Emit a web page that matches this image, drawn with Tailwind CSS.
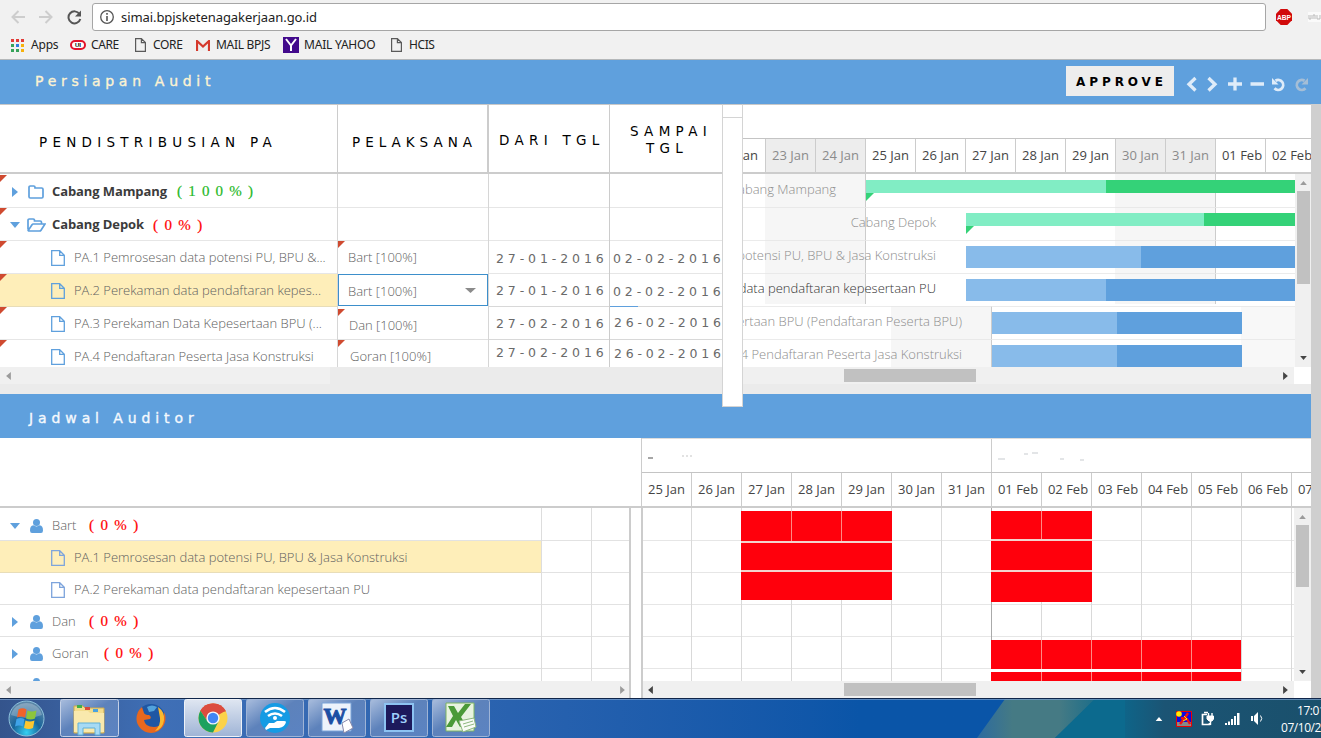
<!DOCTYPE html>
<html lang="id">
<head>
<meta charset="utf-8">
<title>Persiapan Audit</title>
<script src="https://cdn.jsdelivr.net/npm/@tailwindcss/browser@4"></script>
</head>
<body class="w-[1321px] h-[738px] overflow-hidden bg-[#cfcfcf] font-['Open_Sans',sans-serif] text-[13px] text-[#454545]">
<svg class="hidden">
  <symbol id="file" viewBox="0 0 14 16"><path d="M.7.7h8l4.6 4.6v10H.7zM8.7.7v4.6h4.6" fill="none" stroke="currentColor" stroke-width="1.3"/></symbol>
  <symbol id="folder" viewBox="0 0 16 14"><path d="M1 2.3Q1 1 2.3 1h3.4Q7 1 7 2.3V3h6.7Q15 3 15 4.3v7.4q0 1.3-1.3 1.3H2.3Q1 13 1 11.7z" fill="none" stroke="currentColor" stroke-width="1.7"/></symbol>
  <symbol id="folder-open" viewBox="0 0 19 14"><path d="M14.5 6V4.3Q14.500 3 13.200 3H7.500V2.300Q7.500 1 6.200 1H2.300Q1 1 1 2.300v9M1.300 12.400L5 6.800Q5.400 6 6.300 6H18l-4 6.200q-.5.8-1.500.8H2.300Q1 13 1 11.500" fill="none" stroke="currentColor" stroke-width="1.7"/></symbol>
  <symbol id="user" viewBox="0 0 13 14"><circle cx="6.500" cy="3.600" r="3.500" fill="currentColor"/><path d="M0 11.500Q0 6.500 3.300 6.300q3.200 2.300 6.400 0Q13 6.500 13 11.500 13 14 11 14H2Q0 14 0 11.500z" fill="currentColor"/></symbol>
  <symbol id="right" viewBox="0 0 6 10"><path d="M0 0l6 5-6 5z" fill="currentColor"/></symbol>
  <symbol id="left" viewBox="0 0 6 10"><path d="M6 0L0 5l6 5z" fill="currentColor"/></symbol>
  <symbol id="down" viewBox="0 0 10 6"><path d="M0 0h10L5 6z" fill="currentColor"/></symbol>
  <symbol id="up" viewBox="0 0 10 6"><path d="M0 6h10L5 0z" fill="currentColor"/></symbol>
  <symbol id="flag" viewBox="0 0 7 7"><path d="M0 0h7L0 7z" fill="#cf4a30"/></symbol>
  <symbol id="page" viewBox="0 0 11 14"><path d="M.6.6h5.800l4 4v8.800H.6zM6.400.6v4h4" fill="none" stroke="#5a5a5a" stroke-width="1.200"/></symbol>
</svg>

<!-- Browser toolbar -->
<header class="flex h-[60px] flex-col border-b border-[#b5b8ba] bg-[#f1f1f1] font-['Noto_Sans',sans-serif] text-[#222]">
  <div class="flex h-[33px] items-center pt-px">
    <div class="flex w-[92px] items-center gap-[14px] pl-[11px]">
      <svg class="h-[14px] w-[14px]" viewBox="0 0 14 14"><path d="M14 7H1.500M7.500 1l-6 6 6 6" fill="none" stroke="#cdcdcd" stroke-width="2"/></svg>
      <svg class="h-[14px] w-[14px]" viewBox="0 0 14 14"><path d="M0 7h12.500M6.500 1l6 6-6 6" fill="none" stroke="#cdcdcd" stroke-width="2"/></svg>
      <svg class="h-[15px] w-[15px]" viewBox="0 0 15 15"><path d="M12.500 4A6 6 0 1 0 13.300 9" fill="none" stroke="#555" stroke-width="2"/><path d="M14 .5v6H8z" fill="#555"/></svg>
    </div>
    <div class="flex h-[28px] w-[1174px] items-center rounded-[3px] border border-[#a6a6a6] bg-white pl-[7px]">
      <svg class="mr-[7px] h-[14px] w-[14px]" viewBox="0 0 14 14"><circle cx="7" cy="7" r="6.300" fill="none" stroke="#555" stroke-width="1.300"/><path d="M6.200 3h1.600v1.700H6.200zM6.200 6h1.600v5H6.200z" fill="#555"/></svg>
      <span class="whitespace-nowrap text-[13px] tracking-[-0.07px] pt-px">simai.bpjsketenagakerjaan.go.id</span>
    </div>
    <svg class="ml-[10px] h-[16px] w-[16px] shrink-0" viewBox="0 0 16 16"><path d="M4.700 0h6.600L16 4.700v6.600L11.300 16H4.700L0 11.300V4.700z" fill="#d10a0a"/><text x="8" y="10.800" font-family="Liberation Sans" font-size="7" font-weight="bold" fill="#fff" text-anchor="middle" textLength="14" lengthAdjust="spacingAndGlyphs">ABP</text></svg>
    <svg class="ml-[16px] h-[10px] w-[13px] shrink-0" viewBox="0 0 13 10"><path d="M0 0h13v10H0z" fill="#fafafa"/><path d="M1 3v4h2V3M5 7V3h2v4M9 3v4h3V3" fill="none" stroke="#bbb"/></svg>
  </div>
  <nav class="flex h-[24px] items-center text-[12px] whitespace-nowrap">
    <div class="flex w-[59px] items-center gap-[7px] pl-[11px]">
      <svg class="h-[13px] w-[13px] shrink-0" viewBox="0 0 13 13"><g fill="#e23b37"><path d="M0 0h3v3H0z"/><path d="M5 0h3v3H5zM10 0h3v3h-3z"/></g><path d="M0 5h3v3H0zM0 10h3v3H0zM5 10h3v3H5z" fill="#36a35a"/><path d="M5 5h3v3H5z" fill="#2e7de0"/><path d="M10 5h3v3h-3zM10 10h3v3h-3z" fill="#f7b10b"/></svg>
      <span class="tracking-[-0.2px]">Apps</span>
    </div>
    <div class="flex w-[64px] items-center gap-[5px] pl-[11px]">
      <svg class="h-[10px] w-[16px] shrink-0" viewBox="0 0 16 10"><rect x="1" y="1" width="14" height="8" rx="4" fill="#fff" stroke="#e2122b" stroke-width="2"/><text x="8" y="7" font-family="Liberation Sans" font-size="6" font-weight="bold" text-anchor="middle">UI</text></svg>
      <span class="tracking-[-0.4px]">CARE</span>
    </div>
    <div class="flex w-[62px] items-center gap-[7px] pl-[12px]">
      <svg class="h-[14px] w-[11px] shrink-0"><use href="#page"/></svg><span class="tracking-[-0.35px]">CORE</span>
    </div>
    <div class="flex w-[88px] items-center gap-[6px] pl-[11px]">
      <svg class="h-[11px] w-[14px] shrink-0" viewBox="0 0 14 11"><path d="M0 0h14v11H0z" fill="#eee"/><path d="M1 11V1l6 5.500L13 1v10" fill="none" stroke="#d5392c" stroke-width="2.200"/></svg>
      <span class="tracking-[-0.3px]">MAIL BPJS</span>
    </div>
    <div class="flex w-[106px] items-center gap-[5px] pl-[10px]">
      <svg class="h-[16px] w-[16px] shrink-0" viewBox="0 0 16 16"><path d="M0 0h16v16H0z" fill="#420a8c"/><path d="M3 2l5 6.500V14M13 2L8 8.500" fill="none" stroke="#fff" stroke-width="2"/></svg>
      <span class="tracking-[-0.2px]">MAIL YAHOO</span>
    </div>
    <div class="flex items-center gap-[7px] pl-[12px]">
      <svg class="h-[14px] w-[11px] shrink-0"><use href="#page"/></svg><span class="tracking-[-0.4px]">HCIS</span>
    </div>
  </nav>
</header>

<!-- Title bar -->
<div class="flex h-[44px] items-start bg-[#5fa0dd] pl-[35px]">
  <h1 class="w-[1031px] pt-[11px] font-['DejaVu_Sans',sans-serif] text-[14px] leading-[20px] tracking-[4.7px] text-[#fcf3d2] [-webkit-text-stroke:0.35px_#fcf3d2]">Persiapan Audit</h1>
  <button class="mt-[6px] h-[30px] w-[108px] bg-[#ededed] pl-[3px] pt-px font-['DejaVu_Sans',sans-serif] text-[12px] font-bold tracking-[3.9px] text-black">APPROVE</button>
  <svg class="ml-[12px] mt-[16px] h-[16px] w-[123px]" viewBox="0 0 123 16" fill="none" stroke="#dfecf9" stroke-width="3.300"><path d="M9.500 2L3 8.200l6.500 6.300M22.500 2l6.500 6.200-6.500 6.300M42 8h14M49 1.500v13M64.500 8h13.500" /><g stroke-width="2.800"><path d="M89.500 4.700A5 5 0 1 1 88.500 12.300"/><path d="M86 2v6.500h6.500z" fill="#dfecf9" stroke="none"/><path d="M118.500 4.700A5 5 0 1 0 119.500 12.300" stroke="#a5bed6"/><path d="M122 2v6.500h-6.500z" fill="#a5bed6" stroke="none"/></g></svg>
</div>

<!-- Task panel -->
<section class="relative flex h-[290px] w-[1311px] bg-[#ebebeb]">
  <div class="flex h-[280px] w-[722px] flex-col">
    <div class="flex h-[70px] border-t border-b-2 border-t-[#c8c8c8] border-b-[#ccc] bg-white font-['DejaVu_Sans',sans-serif] text-[13.5px] leading-[17px] whitespace-nowrap text-black">
      <div class="w-[338px] border-r border-[#ccc] pt-[29px] pl-[39px] tracking-[5.27px]">PENDISTRIBUSIAN PA</div>
      <div class="w-[151px] border-r-2 border-[#ccc] pt-[29px] pl-[14px] tracking-[5px]">PELAKSANA</div>
      <div class="w-[121px] border-r border-[#ccc] pt-[27px] pl-[10px] tracking-[5.3px]">DARI TGL</div>
      <div class="w-[112px] pt-[18px] pl-[20px] tracking-[5.3px]">SAMPAI<div class="pl-[16px]">TGL</div></div>
    </div>
    <div class="flex h-[193px] overflow-hidden bg-white">
      <div class="w-[338px] shrink-0 border-r border-[#d6d6d6] font-light text-[#606060]">
        <div class="relative flex h-[34px] items-center border-b border-[#e6e6e6] pl-[12px] pt-[2px] text-[#5fa0dd]">
          <svg class="absolute left-0 top-[1px] h-[7px] w-[7px]"><use href="#flag"/></svg>
          <svg class="h-[10px] w-[6px]"><use href="#right"/></svg>
          <svg class="ml-[10px] h-[14px] w-[16px]"><use href="#folder"/></svg>
          <span class="ml-[8px] w-[125px] whitespace-nowrap font-bold tracking-[-0.1px] text-[#3b3b3b]">Cabang Mampang</span>
          <span class="font-['Liberation_Serif',serif] text-[15px] font-normal tracking-[6.2px] text-[#1fb81f] [-webkit-text-stroke:0.2px_#1fb81f]">(100%)</span>
        </div>
        <div class="relative flex h-[33px] items-center border-b border-[#e6e6e6] pl-[10px] pt-[2px] text-[#5fa0dd]">
          <svg class="absolute left-0 top-0 h-[7px] w-[7px]"><use href="#flag"/></svg>
          <svg class="h-[6px] w-[10px]"><use href="#down"/></svg>
          <svg class="ml-[7px] h-[14px] w-[19px]"><use href="#folder-open"/></svg>
          <span class="ml-[6px] w-[101px] whitespace-nowrap font-bold tracking-[-0.1px] text-[#3b3b3b]">Cabang Depok</span>
          <span class="font-['Liberation_Serif',serif] text-[15px] font-normal tracking-[6.4px] text-[#f00] [-webkit-text-stroke:0.2px_#f00]">(0%)</span>
        </div>
        <div class="relative flex h-[33px] items-center border-b border-[#e6e6e6] pt-[1px] pl-[51px]">
          <svg class="absolute left-0 top-0 h-[7px] w-[7px]"><use href="#flag"/></svg>
          <svg class="h-[16px] w-[14px] text-[#5fa0dd]"><use href="#file"/></svg><span class="ml-[9px] whitespace-nowrap">PA.1 Pemrosesan data potensi PU, BPU &amp;...</span>
        </div>
        <div class="relative flex h-[33px] items-center border-b border-[#e8ddb8] bg-[#feeeb9] pt-[2px] pl-[51px]">
          <svg class="absolute left-0 top-0 h-[7px] w-[7px]"><use href="#flag"/></svg>
          <svg class="h-[16px] w-[14px] text-[#5fa0dd]"><use href="#file"/></svg><span class="ml-[9px] whitespace-nowrap">PA.2 Perekaman data pendaftaran kepes...</span>
        </div>
        <div class="relative flex h-[33px] items-center border-b border-[#e6e6e6] pt-[2px] pl-[51px]">
          <svg class="absolute left-0 top-0 h-[7px] w-[7px]"><use href="#flag"/></svg>
          <svg class="h-[16px] w-[14px] text-[#5fa0dd]"><use href="#file"/></svg><span class="ml-[9px] whitespace-nowrap">PA.3 Perekaman Data Kepesertaan BPU (...</span>
        </div>
        <div class="relative flex h-[33px] items-center pl-[51px]">
          <svg class="absolute left-0 top-0 h-[7px] w-[7px]"><use href="#flag"/></svg>
          <svg class="h-[16px] w-[14px] text-[#5fa0dd]"><use href="#file"/></svg><span class="ml-[9px] whitespace-nowrap">PA.4 Pendaftaran Peserta Jasa Konstruksi</span>
        </div>
      </div>
      <div class="w-[151px] shrink-0 border-r border-[#d6d6d6] font-light text-[#606060]">
        <div class="h-[34px] border-b border-[#e6e6e6]"></div>
        <div class="h-[33px] border-b border-[#e6e6e6]"></div>
        <div class="relative flex h-[33px] items-center pl-[10px]"><svg class="absolute left-0 top-0 h-[7px] w-[7px]"><use href="#flag"/></svg>Bart [100%]</div>
        <div class="flex h-[32px] items-center justify-between border border-[#3d8fcb] pl-[9px] pr-[11px]"><span class="pt-[4px]">Bart [100%]</span><svg class="h-[5px] w-[11px] text-[#8b8b8b]" viewBox="0 0 10 6" preserveAspectRatio="none"><path d="M0 0h10L5 6z" fill="currentColor"/></svg></div>
        <div class="relative mt-[3px] flex h-[31px] items-center border-b border-[#e0e0e0] pl-[11px] pt-[4px]"><svg class="absolute left-0 top-0 h-[7px] w-[7px]"><use href="#flag"/></svg>Dan [100%]</div>
        <div class="relative flex h-[31px] items-center pl-[12px] pt-[2px]"><svg class="absolute left-0 top-0 h-[7px] w-[7px]"><use href="#flag"/></svg>Goran [100%]</div>
      </div>
      <div class="w-[121px] shrink-0 border-r border-[#ccc] font-['DejaVu_Sans',sans-serif] text-[12.500px] leading-[33px] tracking-[3.9px] text-[#6a6a6a]">
        <div class="h-[34px] border-b border-[#e6e6e6]"></div>
        <div class="h-[33px] border-b border-[#e6e6e6]"></div>
        <div class="h-[33px] border-b border-[#e6e6e6] pl-[7px] pt-[1px]">27-01-2016</div>
        <div class="h-[33px] border-b border-[#d8d8d8] pl-[7px]">27-01-2016</div>
        <div class="h-[33px] border-b border-[#d8d8d8] pl-[7px]">27-02-2016</div>
        <div class="h-[28px] border-b border-[#d8d8d8] pl-[7px] leading-[26px]">27-02-2016</div>
      </div>
      <div class="w-[112px] shrink-0 whitespace-nowrap font-['DejaVu_Sans',sans-serif] text-[12.500px] leading-[33px] tracking-[3.9px] text-[#6a6a6a]">
        <div class="h-[34px] border-b border-[#e6e6e6]"></div>
        <div class="h-[33px] border-b border-[#e6e6e6]"></div>
        <div class="h-[33px] border-b border-[#e6e6e6] pl-[3px] pt-[1px]">02-02-2016</div>
        <div class="relative h-[33px] border-b border-[#d8d8d8] pl-[3px] pt-[1px]">02-02-2016<i class="absolute -bottom-px left-0 h-px w-[28px] bg-[#5fa0dd]"></i></div>
        <div class="h-[33px] border-b border-[#d8d8d8] pl-[4px] leading-[32px] tracking-[3.8px]">26-02-2016</div>
        <div class="h-[28px] border-b border-[#d8d8d8] pl-[4px] leading-[28px] tracking-[3.8px]">26-02-2016</div>
      </div>
    </div>
    <div class="flex h-[17px] w-[330px] items-center bg-[#f0f0f0] pl-[6px] text-[#9b9b9b]"><svg class="h-[8px] w-[5px]"><use href="#left"/></svg></div>
  </div>

  <!-- Splitter, extends over the next title bar -->
  <div class="relative z-10 -mb-[12px] h-[303px] w-[21px] shrink-0 border border-t-[#c8c8c8] border-x-[#d4d4d4] border-b-[#d4d4d4] bg-white"><div class="h-[13px] border-b border-[#d4d4d4]"></div></div>

  <!-- Timeline -->
  <div class="flex h-[280px] w-[568px] flex-col">
    <div class="h-[35px] border-t border-b border-t-[#c8c8c8] border-b-[#c4c4c4] bg-white"></div>
    <div class="flex h-[35px] overflow-hidden border-b-2 border-[#ccc] bg-white text-center leading-[32px] whitespace-nowrap [&>*]:w-[50px] [&>*]:shrink-0 [&>*]:border-r [&>*]:border-[#ccc]">
      <div class="-ml-[27px] pr-[2px]">22 Jan</div><div class="bg-[#ededed] text-[#8b8b8b]">23 Jan</div><div class="bg-[#ededed] text-[#8b8b8b]">24 Jan</div><div>25 Jan</div><div>26 Jan</div><div>27 Jan</div><div>28 Jan</div><div>29 Jan</div><div class="bg-[#ededed] text-[#8b8b8b]">30 Jan</div><div class="bg-[#ededed] text-[#8b8b8b]">31 Jan</div><div class="pl-[3px]">01 Feb</div><div class="pl-[3px]">02 Feb</div>
    </div>
    <div class="flex h-[193px]">
      <div class="relative w-[552px] overflow-hidden bg-white font-light text-[#8d8d8d] whitespace-nowrap">
        <!-- weekend shading behind the bars -->
        <div class="absolute left-[22px] top-0 h-[130px] w-[101px] border-r border-[#ccc] bg-[#f6f6f6]"></div>
        <div class="absolute left-[372px] top-0 h-[130px] w-[101px] border-r border-[#ccc] bg-[#f6f6f6]"></div>
        <div class="absolute left-[148px] top-[132px] h-[61px] w-[101px] border-r border-[#ccc] bg-[#f6f6f6]"></div>
        <div class="absolute left-[498px] top-[132px] h-[61px] w-[54px] bg-[#f8f8f8]"></div>
        <div class="relative">
          <div class="flex h-[34px] border-b border-[#e6e6e6]/80">
            <div class="flex w-[93px] justify-end pt-[6px]">Cabang Mampang</div>
            <div class="ml-[30px] mt-[6px] h-[13px] w-[240px] bg-[#81edc4]"><svg class="mt-[13px] h-[8px] w-[8px]" viewBox="0 0 8 8"><path d="M0 0h8L0 8z" fill="#34d278"/></svg></div><div class="mt-[6px] h-[13px] w-[189px] bg-[#34d278]"></div>
          </div>
          <div class="flex h-[33px] border-b border-[#e6e6e6]/80">
            <div class="flex w-[193px] justify-end pt-[5px]">Cabang Depok</div>
            <div class="ml-[30px] mt-[5px] h-[13px] w-[238px] bg-[#81edc4]"><svg class="mt-[13px] h-[8px] w-[8px]" viewBox="0 0 8 8"><path d="M0 0h8L0 8z" fill="#34d278"/></svg></div><div class="mt-[5px] h-[13px] w-[91px] bg-[#34d278]"></div>
          </div>
          <div class="flex h-[33px] border-b border-[#e6e6e6]/80">
            <div class="flex w-[193px] justify-end pt-[5px]">PA.1 Pemrosesan data potensi PU, BPU &amp; Jasa Konstruksi</div>
            <div class="ml-[30px] mt-[5px] h-[22px] w-[175px] bg-[#88bbea]"></div><div class="mt-[5px] h-[22px] w-[154px] bg-[#5fa0dd]"></div>
          </div>
          <div class="flex h-[33px] border-b border-[#e6e6e6]/80">
            <div class="flex w-[193px] justify-end pt-[5px] text-[#333]">PA.2 Perekaman data pendaftaran kepesertaan PU</div>
            <div class="ml-[30px] mt-[5px] h-[22px] w-[140px] bg-[#88bbea]"></div><div class="mt-[5px] h-[22px] w-[189px] bg-[#5fa0dd]"></div>
          </div>
          <div class="flex h-[33px] border-b border-[#e6e6e6]/80">
            <div class="flex w-[219px] justify-end pt-[5px]">PA.3 Perekaman Data Kepesertaan BPU (Pendaftaran Peserta BPU)</div>
            <div class="ml-[30px] mt-[5px] h-[22px] w-[125px] bg-[#88bbea]"></div><div class="mt-[5px] h-[22px] w-[125px] bg-[#5fa0dd]"></div>
          </div>
          <div class="flex h-[33px]">
            <div class="flex w-[219px] justify-end pt-[5px]">PA.4 Pendaftaran Peserta Jasa Konstruksi</div>
            <div class="ml-[30px] mt-[5px] h-[22px] w-[125px] bg-[#88bbea]"></div><div class="mt-[5px] h-[22px] w-[125px] bg-[#5fa0dd]"></div>
          </div>
        </div>
      </div>
      <div class="flex w-[16px] flex-col items-center bg-[#f0f0f0] pt-[7px] pb-[7px] text-[#9b9b9b]">
        <svg class="h-[4px] w-[7px]"><use href="#up"/></svg>
        <div class="mt-[6px] ml-[1px] h-[93px] w-[13px] bg-[#c1c1c1]"></div>
        <svg class="mt-auto h-[4px] w-[7px] text-[#444]"><use href="#down"/></svg>
      </div>
    </div>
    <div class="flex h-[17px] bg-white">
      <div class="flex w-[551px] items-center bg-[#f0f0f0] pl-[101px] pr-[6px]"><div class="h-[13px] w-[132px] bg-[#c1c1c1]"></div><svg class="ml-auto h-[8px] w-[5px] text-[#444]"><use href="#right"/></svg></div>
    </div>
  </div>
</section>

<!-- Second title bar -->
<div class="h-[44px] w-[1311px] bg-[#5fa0dd] pl-[29px]">
  <h2 class="pt-[14px] font-['DejaVu_Sans',sans-serif] text-[14px] leading-[20px] tracking-[4.9px] text-[#f5f9fd] [-webkit-text-stroke:0.35px_#f5f9fd]">Jadwal Auditor</h2>
</div>

<!-- Auditor schedule -->
<section class="flex h-[260px] w-[1311px] flex-col bg-white">
  <div class="flex h-[70px] border-b-2 border-[#ccc]">
    <div class="w-[642px] shrink-0 border-r border-[#ccc]"></div>
    <div class="w-[669px] overflow-hidden border-t border-[#ddd]">
      <div class="flex h-[34px] items-center border-b border-[#c4c4c4]">
        <div class="flex h-full w-[350px] items-center border-r border-[#ccc] pl-[6px]"><svg class="h-[8px] w-[62px]" viewBox="0 0 62 8"><path d="M0 6h5" stroke="#888" stroke-width="1.500"/><path d="M34 4h12" stroke="#e2e2e2" stroke-dasharray="2 2" stroke-width="2"/></svg></div>
        <svg class="ml-[6px] h-[12px] w-[106px]" viewBox="0 0 106 12"><path d="M0 9h7M26 4h4M34 3h6M62 9h4M82 10h4" stroke="#c8ccd0" stroke-width="1.200"/></svg>
      </div>
      <div class="flex h-[33px] text-center leading-[32px] whitespace-nowrap [&>*]:w-[50px] [&>*]:shrink-0 [&>*]:border-r [&>*]:border-[#ccc]">
        <div>25 Jan</div><div>26 Jan</div><div>27 Jan</div><div>28 Jan</div><div>29 Jan</div><div>30 Jan</div><div>31 Jan</div><div class="pl-[3px]">01 Feb</div><div class="pl-[3px]">02 Feb</div><div class="pl-[3px]">03 Feb</div><div class="pl-[3px]">04 Feb</div><div class="pl-[3px]">05 Feb</div><div class="pl-[3px]">06 Feb</div><div class="pl-[3px]">07 Feb</div>
      </div>
    </div>
  </div>
  <div class="flex h-[190px]">
    <div class="flex w-[629px] flex-col">
      <div class="relative h-[173px] overflow-hidden font-light text-[#606060]">
        <div class="flex h-[33px] items-center border-b border-[#e2e2e2] pl-[10px] pt-[3px] text-[#5fa0dd]">
          <svg class="h-[6px] w-[10px]"><use href="#down"/></svg><svg class="ml-[10px] h-[14px] w-[13px]"><use href="#user"/></svg><span class="ml-[9px] w-[37px] text-[#606060]">Bart</span><span class="font-['Liberation_Serif',serif] text-[15px] font-normal tracking-[6.4px] text-[#f00] [-webkit-text-stroke:0.2px_#f00]">(0%)</span>
        </div>
        <div class="flex h-[32px] items-start border-b border-[#e2e2e2]"><div class="flex h-[32px] w-[541px] items-center border-b border-[#e8ddb8] bg-[#feeeb9] pt-[2px] pl-[51px]"><svg class="h-[16px] w-[14px] text-[#7da4dc]"><use href="#file"/></svg><span class="ml-[9px]">PA.1 Pemrosesan data potensi PU, BPU &amp; Jasa Konstruksi</span></div></div>
        <div class="flex h-[32px] items-center border-b border-[#e2e2e2] pt-[2px] pl-[51px]"><svg class="h-[16px] w-[14px] text-[#7da4dc]"><use href="#file"/></svg><span class="ml-[9px]">PA.2 Perekaman data pendaftaran kepesertaan PU</span></div>
        <div class="flex h-[32px] items-center border-b border-[#e2e2e2] pt-[2px] pl-[12px] text-[#5fa0dd]">
          <svg class="h-[10px] w-[6px]"><use href="#right"/></svg><svg class="ml-[12px] h-[14px] w-[13px]"><use href="#user"/></svg><span class="ml-[9px] w-[37px] text-[#606060]">Dan</span><span class="font-['Liberation_Serif',serif] text-[15px] font-normal tracking-[6.4px] text-[#f00] [-webkit-text-stroke:0.2px_#f00]">(0%)</span>
        </div>
        <div class="flex h-[32px] items-center border-b border-[#e2e2e2] pt-[2px] pl-[12px] text-[#5fa0dd]">
          <svg class="h-[10px] w-[6px]"><use href="#right"/></svg><svg class="ml-[12px] h-[14px] w-[13px]"><use href="#user"/></svg><span class="ml-[9px] w-[52px] text-[#606060]">Goran</span><span class="font-['Liberation_Serif',serif] text-[15px] font-normal tracking-[6.4px] text-[#f00] [-webkit-text-stroke:0.2px_#f00]">(0%)</span>
        </div>
        <div class="flex h-[32px] items-center pl-[30px] text-[#5fa0dd]"><svg class="h-[14px] w-[13px]"><use href="#user"/></svg></div>
        <div class="absolute left-[541px] top-0 h-full w-[51px] border-x border-[#ddd]"></div>
      </div>
      <div class="flex h-[17px] items-center justify-between bg-[#f0f0f0] pl-[6px] pr-[4px] text-[#9b9b9b]"><svg class="h-[8px] w-[5px]"><use href="#left"/></svg><svg class="h-[8px] w-[5px]"><use href="#right"/></svg></div>
    </div>
    <div class="w-[14px] shrink-0 border-x-2 border-[#ccc] bg-white"></div>
    <div class="flex w-[668px] flex-col">
      <div class="flex h-[173px]">
        <div class="relative w-[651px] overflow-hidden">
          <!-- grid -->
          <div class="flex flex-col [&>*]:h-[32px] [&>*]:border-b [&>*]:border-[#e6e6e6]"><div class="mt-px"></div><div></div><div></div><div></div><div></div></div>
          <div class="absolute -left-[1px] top-0 flex h-full [&>*]:w-[50px] [&>*]:border-r [&>*]:border-[#d9d9d9]"><i></i><i></i><i></i><i></i><i></i><i></i><i class="border-r-[#aaa]!"></i><i></i><i></i><i></i><i></i><i></i><i></i></div>
          <!-- busy blocks -->
          <div class="absolute left-[98px] top-[3px] flex w-[151px] flex-col">
            <div class="grid h-[30px] grid-cols-[50px_49px_50px] gap-px bg-[#ff8a84] [&>*]:bg-[#ff000c]"><i></i><i></i><i></i></div>
            <div class="h-[2px] bg-[#f3d3cc]"></div>
            <div class="h-[27px] bg-[#ff000c]"></div>
            <div class="h-[2px] bg-[#f3d3cc]"></div>
            <div class="h-[28px] bg-[#ff000c]"></div>
          </div>
          <div class="absolute left-[348px] top-[3px] flex w-[101px] flex-col">
            <div class="grid h-[28px] grid-cols-[50px_50px] gap-px bg-[#ff8a84] [&>*]:bg-[#ff000c]"><i></i><i></i></div>
            <div class="h-[2px] bg-[#f3d3cc]"></div>
            <div class="h-[29px] bg-[#ff000c]"></div>
            <div class="h-[2px] bg-[#f3d3cc]"></div>
            <div class="h-[30px] bg-[#ff000c]"></div>
          </div>
          <div class="absolute left-[348px] top-[132px] flex w-[250px] flex-col">
            <div class="grid h-[29px] grid-cols-[50px_49px_49px_49px_49px] gap-px bg-[#ff8a84] [&>*]:bg-[#ff000c]"><i></i><i></i><i></i><i></i><i></i></div>
            <div class="h-[3px] bg-white"></div>
            <div class="grid h-[20px] grid-cols-[50px_49px_49px_49px_49px] gap-px bg-[#ff8a84] [&>*]:bg-[#ff000c]"><i></i><i></i><i></i><i></i><i></i></div>
          </div>
        </div>
        <div class="flex w-[17px] flex-col items-center bg-[#f0f0f0] pt-[7px] pb-[7px] text-[#9b9b9b]">
          <svg class="h-[4px] w-[7px]"><use href="#up"/></svg>
          <div class="mt-[6px] h-[62px] w-[13px] bg-[#c1c1c1]"></div>
          <svg class="mt-auto h-[4px] w-[7px] text-[#444]"><use href="#down"/></svg>
        </div>
      </div>
      <div class="flex h-[17px] w-[651px] items-center bg-[#f0f0f0] pl-[5px] pr-[6px] text-[#444]"><svg class="h-[8px] w-[5px]"><use href="#left"/></svg><div class="ml-[191px] h-[13px] w-[132px] bg-[#c1c1c1]"></div><svg class="ml-auto h-[8px] w-[5px]"><use href="#right"/></svg></div>
    </div>
  </div>
</section>

<!-- Taskbar -->
<footer class="relative flex h-[40px] items-stretch border-t border-[#10264a] bg-linear-to-r from-[#34548c] from-0% via-[#3f6fb6] via-12% to-[#0a55a8] to-65%">
  <svg class="absolute inset-0 h-full w-full" viewBox="0 0 1321 39" preserveAspectRatio="none">
    <defs>
      <linearGradient id="teal" x1="0" x2="1"><stop offset="0" stop-color="#0c6a8e"/><stop offset=".25" stop-color="#0f6488"/><stop offset=".4" stop-color="#1b5474"/><stop offset="1" stop-color="#1a506c"/></linearGradient>
      <linearGradient id="haze" x1="0" x2="1"><stop offset="0" stop-color="#2c6ba0"/><stop offset=".3" stop-color="#457a84"/><stop offset=".7" stop-color="#457a84"/><stop offset="1" stop-color="#1d6e8a"/></linearGradient>
      <linearGradient id="btn" x1="0" x2="1" y2="1"><stop offset="0" stop-color="#a9bddd"/><stop offset=".45" stop-color="#5d82bb"/><stop offset="1" stop-color="#5b83c2"/></linearGradient>
      <linearGradient id="btnOn" x1="0" x2="0" y2="1"><stop offset="0" stop-color="#dfe6f1"/><stop offset="1" stop-color="#9fb4d6"/></linearGradient>
      <radialGradient id="orb" cx=".5" cy=".9" r=".8"><stop offset="0" stop-color="#35d0f2"/><stop offset=".5" stop-color="#17649a"/><stop offset="1" stop-color="#5b86a8"/></radialGradient>
    </defs>
    <path d="M1060 0h261v39h-261z" fill="url(#teal)"/>
    <path d="M1005 0h90l-40 39h-78z" fill="url(#haze)"/>
    <path d="M1095 0h30v39h-70z" fill="#0c6a8e"/>
    <path d="M0 .5h1321" stroke="#7fa3cf" stroke-opacity=".7"/>
  </svg>
  <div class="relative flex w-[60px] items-center pl-[8px]">
    <svg class="h-[37px] w-[37px]" viewBox="0 0 37 37"><circle cx="18.500" cy="18.500" r="17.500" fill="url(#orb)" stroke="#8ec1dc"/><path d="M3 15a16 16 0 0 1 31 0q-15 6-31 0z" fill="#fff" opacity=".25"/><path d="M10.500 9.500q4-2.500 8 0l-1.500 8q-4-2-8 0z" fill="#f0632a"/><path d="M19.500 10.500q4 2 9 0l-1.500 8q-4 2-9 0z" fill="#8cc63c"/><path d="M8.500 19q4-2 8 0l-1.500 7.500q-4-2-8 0z" fill="#3fa3e8"/><path d="M17.500 20.500q4 2 9 0L25 28q-4 2-9 0z" fill="#fcc62f"/></svg>
  </div>
  <!-- Explorer -->
  <svg class="relative h-[39px] w-[62px]" viewBox="0 0 62 39"><rect x=".5" y=".5" width="58" height="37" rx="2" fill="url(#btn)" stroke="#c3d0e6"/><path d="M14 7h9l2 2h19v25H14z" fill="#f3dc8c" stroke="#caa94f"/><path d="M17 6h5v3h-5z" fill="#3fae49"/><path d="M25 8h5v3h-5z" fill="#d8493a"/><path d="M33 10h5v3h-5z" fill="#4aa3df"/><path d="M14 12h14l2 2h14v19H14z" fill="#f9e9ad"/><path d="M18 36V24h22v12h-5v-7H23v7z" fill="#a6daf5" stroke="#5eafd8"/></svg>
  <!-- Firefox -->
  <svg class="relative h-[39px] w-[62px]" viewBox="3 0 62 39"><circle cx="32" cy="19" r="14" fill="#1f57a4"/><path d="M23 8a14.500 14.500 0 1 0 22 5q0 15-10 15-9 0-10-7l6-1q2-2-1-4-4 0-5-2z" fill="#e8681e"/><path d="M39 8q7 5 6 13-1 9-9 11 6-6 5-13z" fill="#fbb92e"/><path d="M28 8q5-3 10 0l-3 4-5 1z" fill="#52a2dc"/></svg>
  <!-- Chrome -->
  <svg class="relative h-[39px] w-[62px]" viewBox="0 0 62 39"><rect x=".5" y=".5" width="57" height="37" rx="2" fill="url(#btnOn)" stroke="#eef2f8"/><g transform="translate(29 19)"><circle r="14.500" fill="#fbd24a"/><path d="M0 0L-12.600-7.200A14.500 14.500 0 0 1 12.600-7.200z" fill="#dc4c3f"/><path d="M0-6.500h13A14.500 14.500 0 0 0-12.600-7.200L-5.500 3.500z" fill="#dc4c3f"/><path d="M-12.600-7.200A14.500 14.500 0 0 0 0 14.500L5.600 3.300-5.600 3.300z" fill="#1da15f"/><circle r="6.600" fill="#f4f6fa"/><circle r="5.200" fill="#4285f4"/></g></svg>
  <!-- Wireless sharing -->
  <svg class="relative h-[39px] w-[62px]" viewBox="0 0 62 39"><rect x=".5" y=".5" width="57" height="37" rx="2" fill="url(#btn)" stroke="#9fb4d6"/><circle cx="29" cy="19" r="15" fill="#159be4"/><path d="M19 13q10-8 20 0M22 17q7-5 14 0" fill="none" stroke="#fff" stroke-width="2.600"/><circle cx="29" cy="19" r="2" fill="#fff"/><path d="M19 29l4-5h5l3-2h7q2 0 2 1-1 5-7 6h-9l-4 2z" fill="#fff"/></svg>
  <!-- Word -->
  <svg class="relative h-[39px] w-[62px]" viewBox="0 0 62 39"><rect x=".5" y=".5" width="57" height="37" rx="2" fill="url(#btn)" stroke="#9fb4d6"/><path d="M14 4h29v28H14z" fill="#edf3fb" stroke="#7ba3d8"/><path d="M34 24l7-4 4 9-9 5z" fill="#fff" stroke="#88a"/><text x="27" y="25" font-family="Liberation Serif" font-size="23" font-weight="bold" fill="#1c4fa4" text-anchor="middle" stroke="#1c4fa4">W</text></svg>
  <!-- Photoshop -->
  <svg class="relative h-[39px] w-[62px]" viewBox="0 0 62 39"><rect x=".5" y=".5" width="57" height="37" rx="2" fill="url(#btn)" stroke="#9fb4d6"/><path d="M15 5h28v27H15z" fill="#1d1a5c" stroke="#8dc3f2" stroke-width="2"/><text x="29" y="24" font-family="Open Sans" font-size="15" font-weight="600" fill="#9fd0fb" text-anchor="middle">Ps</text></svg>
  <!-- Excel -->
  <svg class="relative h-[39px] w-[62px]" viewBox="0 0 62 39"><rect x=".5" y=".5" width="57" height="37" rx="2" fill="url(#btn)" stroke="#9fb4d6"/><path d="M14 4h28v28H14z" fill="#e8f3df" stroke="#7db462"/><path d="M16 7h6l4 7 7-9h6L29 18l6 10h-7l-4-7-4 7h-6l7-11z" fill="#4b9a38"/><path d="M27 22l15-3 2 9-13 5z" fill="#f8fbf6" stroke="#8fb880"/><path d="M31 25l10-3M32 28l10-3" stroke="#8fb880"/></svg>
  <!-- Tray -->
  <div class="relative ml-auto flex w-[166px] items-center text-white">
    <svg class="h-[4px] w-[8px] shrink-0"><use href="#up"/></svg>
    <svg class="ml-[13px] h-[16px] w-[16px] shrink-0" viewBox="0 0 16 16"><path d="M.5.500h15v15H.5z" fill="#0a0ae0" stroke="#e00"/><path d="M1 11h14v4H1z" fill="#888"/><circle cx="3" cy="3" r="2.800" fill="#fe0"/><path d="M12 2L8 8l-4 5M5 7l6 1 3 5" stroke="#e11" stroke-width="2.400" fill="none"/><path d="M8 5l3 3-4 2" stroke="#fe0" fill="none"/></svg>
    <svg class="ml-[9px] h-[15px] w-[13px] shrink-0" viewBox="0 0 13 15" fill="none" stroke="#fff"><path d="M6 3.500H1.500v10h7V12M3 1.500h4" stroke-width="1.700"/><path d="M6 5h6.500v3L11 10H8L6 8z" fill="#fff"/><path d="M7.500 2v3M11 2v3M9.500 10v4" stroke-width="1.400"/></svg>
    <svg class="ml-[11px] h-[12px] w-[15px] shrink-0" viewBox="0 0 15 12" fill="#fff"><path d="M0 10h2v2H0zM3 8.500h2V12H3zM6 6h2v6H6zM9 3h2v9H9zM12 0h2.500v12H12z"/></svg>
    <svg class="ml-[11px] h-[13px] w-[13px] shrink-0" viewBox="0 0 13 13"><path d="M0 4h2v5H0zM3 4l4-4v13L3 9z" fill="#fff"/><path d="M9.500 3.500q2.500 3 0 6" fill="none" stroke="#fff"/></svg>
    <div class="ml-[17px] flex h-full w-[40px] shrink-0 flex-col overflow-hidden pt-[3px] text-[12px] leading-[17px] tracking-[-0.45px] whitespace-nowrap"><span class="pl-[16px]">17:01</span><span>07/10/2016</span></div>
  </div>
</footer>
</body>
</html>
